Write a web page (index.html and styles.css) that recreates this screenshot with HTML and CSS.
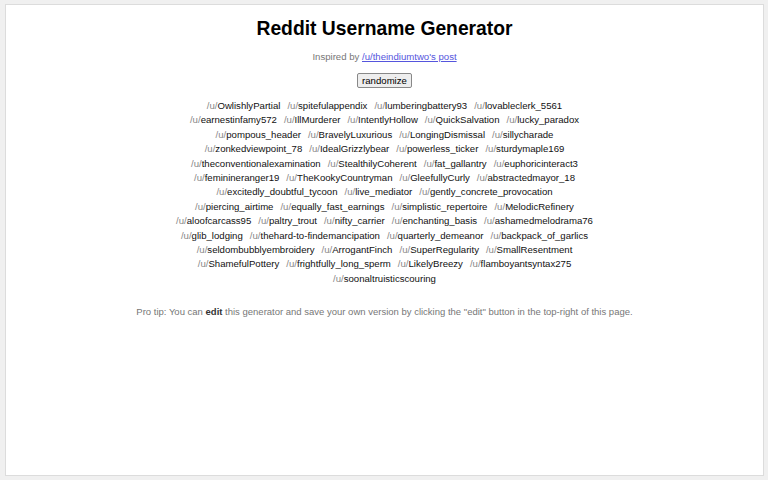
FILE: index.html
```html
<!DOCTYPE html>
<html>
<head>
<meta charset="utf-8">
<link rel="stylesheet" href="styles.css">
</head>
<body>
<div class="page">
  <h1 class="title">Reddit Username Generator</h1>
  <p class="inspired">Inspired by <a href="#">/u/theindiumtwo's post</a></p>
  <div class="actions"><button class="btn">randomize</button></div>
  <div class="names">
    <div class="line"><span class="n"><i>/u/</i>OwlishlyPartial</span><span class="n"><i>/u/</i>spitefulappendix</span><span class="n"><i>/u/</i>lumberingbattery93</span><span class="n"><i>/u/</i>lovableclerk_5561</span></div>
    <div class="line"><span class="n"><i>/u/</i>earnestinfamy572</span><span class="n"><i>/u/</i>IllMurderer</span><span class="n"><i>/u/</i>IntentlyHollow</span><span class="n"><i>/u/</i>QuickSalvation</span><span class="n"><i>/u/</i>lucky_paradox</span></div>
    <div class="line"><span class="n"><i>/u/</i>pompous_header</span><span class="n"><i>/u/</i>BravelyLuxurious</span><span class="n"><i>/u/</i>LongingDismissal</span><span class="n"><i>/u/</i>sillycharade</span></div>
    <div class="line"><span class="n"><i>/u/</i>zonkedviewpoint_78</span><span class="n"><i>/u/</i>IdealGrizzlybear</span><span class="n"><i>/u/</i>powerless_ticker</span><span class="n"><i>/u/</i>sturdymaple169</span></div>
    <div class="line"><span class="n"><i>/u/</i>theconventionalexamination</span><span class="n"><i>/u/</i>StealthilyCoherent</span><span class="n"><i>/u/</i>fat_gallantry</span><span class="n"><i>/u/</i>euphoricinteract3</span></div>
    <div class="line"><span class="n"><i>/u/</i>feminineranger19</span><span class="n"><i>/u/</i>TheKookyCountryman</span><span class="n"><i>/u/</i>GleefullyCurly</span><span class="n"><i>/u/</i>abstractedmayor_18</span></div>
    <div class="line"><span class="n"><i>/u/</i>excitedly_doubtful_tycoon</span><span class="n"><i>/u/</i>live_mediator</span><span class="n"><i>/u/</i>gently_concrete_provocation</span></div>
    <div class="line"><span class="n"><i>/u/</i>piercing_airtime</span><span class="n"><i>/u/</i>equally_fast_earnings</span><span class="n"><i>/u/</i>simplistic_repertoire</span><span class="n"><i>/u/</i>MelodicRefinery</span></div>
    <div class="line"><span class="n"><i>/u/</i>aloofcarcass95</span><span class="n"><i>/u/</i>paltry_trout</span><span class="n"><i>/u/</i>nifty_carrier</span><span class="n"><i>/u/</i>enchanting_basis</span><span class="n"><i>/u/</i>ashamedmelodrama76</span></div>
    <div class="line"><span class="n"><i>/u/</i>glib_lodging</span><span class="n"><i>/u/</i>thehard-to-findemancipation</span><span class="n"><i>/u/</i>quarterly_demeanor</span><span class="n"><i>/u/</i>backpack_of_garlics</span></div>
    <div class="line"><span class="n"><i>/u/</i>seldombubblyembroidery</span><span class="n"><i>/u/</i>ArrogantFinch</span><span class="n"><i>/u/</i>SuperRegularity</span><span class="n"><i>/u/</i>SmallResentment</span></div>
    <div class="line"><span class="n"><i>/u/</i>ShamefulPottery</span><span class="n"><i>/u/</i>frightfully_long_sperm</span><span class="n"><i>/u/</i>LikelyBreezy</span><span class="n"><i>/u/</i>flamboyantsyntax275</span></div>
    <div class="line"><span class="n"><i>/u/</i>soonaltruisticscouring</span></div>
  </div>
  <p class="tip">Pro tip: You can <b>edit</b> this generator and save your own version by clicking the "edit" button in the top-right of this page.</p>
</div>
</body>
</html>
```
FILE: styles.css
```css
html, body {
  margin: 0;
  padding: 0;
}
body {
  background: #f0f0f0;
  font-family: "Liberation Sans", Arial, sans-serif;
  padding: 4px 4px 4px 5px;
  height: 480px;
  box-sizing: border-box;
}
.page {
  background: #fff;
  border: 1px solid #dcdcdc;
  height: 100%;
  box-sizing: border-box;
  text-align: center;
  padding-top: 12px;
}
.title {
  font-size: 19.3px;
  font-weight: bold;
  margin: 0;
  line-height: 24px;
  color: #000;
}
.inspired {
  font-size: 9.6px;
  color: #777;
  margin: 9px 0 0;
  line-height: 14px;
}
.inspired a {
  color: #5555dd;
}
.actions {
  margin-top: 9px;
  display: flex;
  justify-content: center;
}
.btn {
  font-family: "Liberation Sans", Arial, sans-serif;
  font-size: 9.6px;
  padding: 1px 4px;
  border: 1px solid #888;
  border-radius: 2px;
  background: #eee;
  color: #000;
  line-height: 11px;
  margin: 0;
}
.names {
  margin-top: 11px;
  font-size: 9.6px;
  line-height: 14.4px;
  color: #111;
}
.n {
  margin: 0 3.5px;
}
.n i {
  font-style: normal;
  color: #888;
}
.tip {
  font-size: 9.5px;
  color: #777;
  margin: 19px 0 0;
  line-height: 14px;
}
.tip b {
  color: #333;
}
```
